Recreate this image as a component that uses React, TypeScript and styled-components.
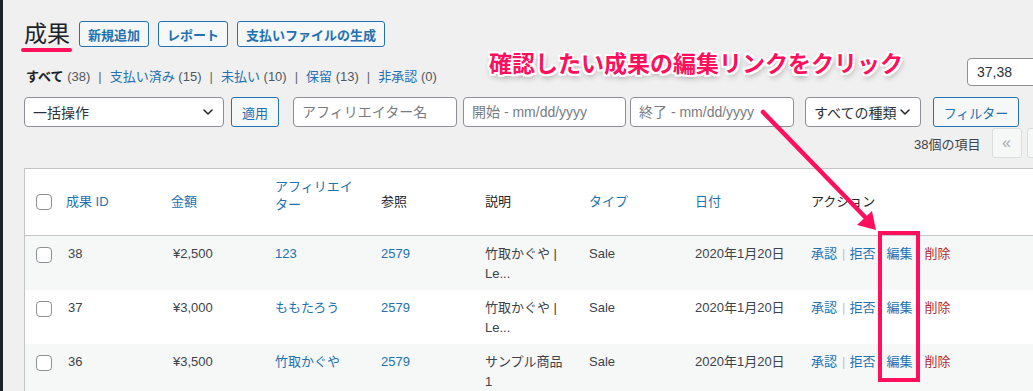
import React from 'react';
import styled, { createGlobalStyle, css } from 'styled-components';

type TAction = { label: string; tone?: 'link' | 'delete'; ml?: number; sep?: boolean };
type TRow = {
  id: string;
  amount: string;
  affiliate: string;
  reference: string;
  description: string;
  type: string;
  date: string;
};

const ROWS: TRow[] = [
  { id: '38', amount: '¥2,500', affiliate: '123', reference: '2579', description: '竹取かぐや | Le...', type: 'Sale', date: '2020年1月20日' },
  { id: '37', amount: '¥3,000', affiliate: 'ももたろう', reference: '2579', description: '竹取かぐや | Le...', type: 'Sale', date: '2020年1月20日' },
  { id: '36', amount: '¥3,500', affiliate: '竹取かぐや', reference: '2579', description: 'サンプル商品 1', type: 'Sale', date: '2020年1月20日' },
];

const ACTIONS: TAction[] = [
  { label: '承認', sep: true },
  { label: '拒否' },
  { label: '編集', ml: 11 },
  { label: '削除', tone: 'delete', ml: 12 },
];

const STATUS = [
  { label: 'すべて', count: 38, current: true },
  { label: '支払い済み', count: 15 },
  { label: '未払い', count: 10 },
  { label: '保留', count: 13 },
  { label: '非承認', count: 0 },
];

// column widths: check, id, amount, affiliate, reference, description, type, date, actions
const COLS = [31, 105, 104, 106, 104, 104, 106, 116, 'auto'] as const;

function Chevron() {
  return (
    <svg width="10" height="6" viewBox="0 0 10 6" fill="none">
      <path d="M1 1l4 4 4-4" stroke="#1d2327" strokeWidth="1.5" strokeLinecap="round" strokeLinejoin="round" />
    </svg>
  );
}

export default function App() {
  return (
    <Page>
      <GlobalStyle />
      <AdminBar />
      <Content>
        <TitleRow>
          <Title>成果</Title>
          <TitleAction>新規追加</TitleAction>
          <TitleAction>レポート</TitleAction>
          <TitleAction>支払いファイルの生成</TitleAction>
        </TitleRow>

        <SubRow>
          <StatusList>
            {STATUS.map((s, i) => (
              <React.Fragment key={s.label}>
                {i > 0 && <StatusSep>|</StatusSep>}
                <StatusLink $current={!!s.current}>{s.label}</StatusLink>
                <Count> ({s.count})</Count>
              </React.Fragment>
            ))}
          </StatusList>
          <SearchInput defaultValue="37,38" />
        </SubRow>

        <FilterRow>
          <Select $w={200}>
            <span>一括操作</span>
            <Chevron />
          </Select>
          <Button $ml={7} $w={48}>適用</Button>
          <TextInput $ml={14} $w={164} placeholder="アフィリエイター名" />
          <TextInput $ml={6} $w={163} placeholder="開始 - mm/dd/yyyy" />
          <TextInput $ml={4} $w={164} placeholder="終了 - mm/dd/yyyy" />
          <Select $ml={11} $w={116}>
            <span>すべての種類</span>
            <Chevron />
          </Select>
          <Button $ml={12} $w={86}>フィルター</Button>
        </FilterRow>

        <PaginationRow>
          <ItemCount>38個の項目</ItemCount>
          <PageButton>«</PageButton>
          <PageButton>‹</PageButton>
          <PageInput defaultValue="1" />
          <PageTotal>/ 2</PageTotal>
          <PageButton $active>›</PageButton>
          <PageButton $active>»</PageButton>
        </PaginationRow>

        <Table>
          <colgroup>
            {COLS.map((w, i) => (
              <col key={i} style={w === 'auto' ? undefined : { width: w }} />
            ))}
          </colgroup>
          <thead>
            <tr>
              <HeadCheck>
                <Checkbox />
              </HeadCheck>
              <Th $sortable>成果 ID</Th>
              <Th $sortable>金額</Th>
              <Th $sortable $lift>アフィリエイター</Th>
              <Th>参照</Th>
              <Th>説明</Th>
              <Th $sortable>タイプ</Th>
              <Th $sortable>日付</Th>
              <Th>アクション</Th>
            </tr>
          </thead>
          <tbody>
            {ROWS.map((r, i) => (
              <Tr key={r.id} $alt={i % 2 === 0}>
                <CheckCell>
                  <Checkbox />
                </CheckCell>
                <Td $nudge={2}>{r.id}</Td>
                <Td $nudge={2}>{r.amount}</Td>
                <Td>
                  <Link>{r.affiliate}</Link>
                </Td>
                <Td>
                  <Link>{r.reference}</Link>
                </Td>
                <Td>{r.description}</Td>
                <Td>{r.type}</Td>
                <Td>{r.date}</Td>
                <Td>
                  <RowActions>
                    {ACTIONS.map(a => (
                      <React.Fragment key={a.label}>
                        <Action $tone={a.tone || 'link'} $ml={a.ml || 0}>
                          {a.label}
                        </Action>
                        {a.sep && <ActionSep>|</ActionSep>}
                      </React.Fragment>
                    ))}
                  </RowActions>
                </Td>
              </Tr>
            ))}
          </tbody>
        </Table>
      </Content>

      {/* annotation overlay */}
      <Callout>確認したい成果の編集リンクをクリック</Callout>
      <ArrowSvg width="140" height="140" viewBox="0 0 140 140">
        <line x1="8" y1="7" x2="110" y2="112" stroke="#ff0f5c" strokeWidth="4.5" strokeLinecap="round" />
        <polygon points="121,125 102,120 117,106" fill="#ff0f5c" />
      </ArrowSvg>
      <Highlight />
    </Page>
  );
}

const PINK = '#ff0f5c';
const BLUE = '#2271b1';

const GlobalStyle = createGlobalStyle`
  html, body {
    margin: 0;
    padding: 0;
    overflow: hidden;
    background: #f0f0f1;
  }
  body {
    font-family: "Liberation Sans", "Noto Sans CJK JP", sans-serif;
    font-size: 13px;
    color: #3c434a;
  }
  * {
    box-sizing: border-box;
  }
`;

const Page = styled.div`
  position: relative;
  display: flex;
  width: 1033px;
  height: 391px;
  overflow: hidden;
  background: #f0f0f1;
`;

const AdminBar = styled.div`
  flex: none;
  width: 3px;
  background: #1d2327;
`;

const Content = styled.div`
  flex: none;
  width: 1196px;
  padding: 21px 0 0 21px;
`;

const TitleRow = styled.div`
  display: flex;
  align-items: center;
  gap: 9px;
  height: 26px;
`;

const Title = styled.h1`
  position: relative;
  margin: 0;
  font-size: 23px;
  font-weight: 400;
  line-height: 26px;
  color: #1d2327;
  &::after {
    content: '';
    position: absolute;
    left: -3px;
    bottom: -5px;
    width: 51px;
    height: 4px;
    border-radius: 2px;
    background: ${PINK};
  }
`;

const TitleAction = styled.a`
  display: inline-flex;
  align-items: center;
  height: 26px;
  padding: 0 8px;
  border: 1px solid ${BLUE};
  border-radius: 3px;
  background: #f6f7f7;
  color: ${BLUE};
  font-size: 13px;
  font-weight: 700;
  white-space: nowrap;
`;

const SubRow = styled.div`
  display: flex;
  align-items: flex-start;
  margin-top: 11px;
`;

const StatusList = styled.div`
  padding: 9px 0 0 2px;
  line-height: 20px;
  font-size: 13px;
  white-space: nowrap;
`;

const StatusLink = styled.a<{ $current: boolean }>`
  color: ${BLUE};
  ${p =>
    p.$current &&
    css`
      color: #1d2327;
      font-weight: 700;
    `}
`;

const Count = styled.span`
  color: #50575e;
`;

const StatusSep = styled.span`
  padding: 0 8px;
  color: #646970;
`;

const SearchInput = styled.input`
  margin-left: auto;
  width: 232px;
  height: 28px;
  padding: 0 9px;
  border: 1px solid #8c8f94;
  border-radius: 4px;
  background: #fff;
  color: #2c3338;
  font-family: inherit;
  font-size: 14px;
  outline: none;
`;

const FilterRow = styled.div`
  display: flex;
  align-items: center;
  margin-top: 10px;
  height: 30px;
`;

const controlBox = css<{ $ml?: number; $w: number }>`
  flex: none;
  width: ${p => p.$w}px;
  height: 30px;
  margin-left: ${p => p.$ml || 0}px;
  border-radius: 4px;
  font-family: inherit;
`;

const Select = styled.div<{ $ml?: number; $w: number }>`
  ${controlBox};
  display: flex;
  align-items: center;
  justify-content: space-between;
  padding: 0 10px 0 8px;
  border: 1px solid #8c8f94;
  background: #fff;
  color: #2c3338;
  font-size: 14px;
  white-space: nowrap;
`;

const TextInput = styled.input<{ $ml?: number; $w: number }>`
  ${controlBox};
  padding: 0 8px;
  border: 1px solid #8c8f94;
  background: #fff;
  font-size: 14px;
  outline: none;
  &::placeholder {
    color: #787c82;
  }
`;

const Button = styled.button<{ $ml?: number; $w: number }>`
  ${controlBox};
  padding: 0;
  border: 1px solid ${BLUE};
  border-radius: 3px;
  background: #f6f7f7;
  color: ${BLUE};
  font-size: 13px;
  white-space: nowrap;
`;

const PaginationRow = styled.div`
  display: flex;
  align-items: center;
  justify-content: flex-end;
  gap: 5px;
  margin-top: 1px;
  padding-right: 10px;
  height: 30px;
`;

const ItemCount = styled.span`
  margin-right: 6px;
  color: #3c434a;
  font-size: 13px;
`;

const PageButton = styled.span<{ $active?: boolean }>`
  display: flex;
  align-items: center;
  justify-content: center;
  width: 30px;
  height: 30px;
  border: 1px solid #dcdcde;
  border-radius: 3px;
  background: #f6f7f7;
  color: #a7aaad;
  font-size: 16px;
  ${p =>
    p.$active &&
    css`
      border-color: ${BLUE};
      color: ${BLUE};
    `}
`;

const PageInput = styled.input`
  width: 34px;
  height: 30px;
  border: 1px solid #8c8f94;
  border-radius: 4px;
  text-align: center;
  font-size: 13px;
`;

const PageTotal = styled.span`
  padding: 0 2px;
  font-size: 13px;
`;

const Table = styled.table`
  width: 100%;
  margin-top: 10px;
  border: 1px solid #c3c4c7;
  border-collapse: separate;
  border-spacing: 0;
  table-layout: fixed;
  background: #fff;
`;

const Th = styled.th<{ $sortable?: boolean; $lift?: boolean }>`
  height: 67px;
  padding: 0 10px;
  border-bottom: 1px solid #c3c4c7;
  text-align: left;
  vertical-align: middle;
  font-size: 13px;
  font-weight: 400;
  line-height: 18px;
  color: ${p => (p.$sortable ? BLUE : '#1d2327')};
  ${p =>
    p.$lift &&
    css`
      padding-bottom: 12px;
    `}
`;

const HeadCheck = styled.td`
  height: 67px;
  padding: 0 0 0 11px;
  border-bottom: 1px solid #c3c4c7;
  vertical-align: middle;
`;

const Tr = styled.tr<{ $alt: boolean }>`
  background: ${p => (p.$alt ? '#f6f7f7' : '#fff')};
`;

const Td = styled.td<{ $nudge?: number }>`
  padding: 8px 10px 6px ${p => 10 + (p.$nudge || 0)}px;
  vertical-align: top;
  font-size: 13px;
  line-height: 20px;
  color: #3c434a;
`;

const CheckCell = styled.td`
  padding: 11px 0 0 11px;
  vertical-align: top;
`;

const Checkbox = styled.span`
  display: block;
  width: 16px;
  height: 16px;
  border: 1px solid #8c8f94;
  border-radius: 4px;
  background: #fff;
`;

const Link = styled.a`
  color: ${BLUE};
`;

const RowActions = styled.div`
  display: flex;
  align-items: center;
  white-space: nowrap;
`;

const Action = styled.a<{ $tone: 'link' | 'delete'; $ml: number }>`
  margin-left: ${p => p.$ml}px;
  color: ${p => (p.$tone === 'delete' ? '#b32d2e' : BLUE)};
`;

const ActionSep = styled.span`
  margin: 0 4px 0 5px;
  color: #c3c4c7;
`;

const Callout = styled.div`
  position: absolute;
  left: 489px;
  top: 48px;
  font-family: "Noto Sans CJK JP", sans-serif;
  font-size: 23px;
  font-weight: 700;
  line-height: 28px;
  color: ${PINK};
  white-space: nowrap;
  text-shadow:
    -2px -2px 0 #fff, 2px -2px 0 #fff, -2px 2px 0 #fff, 2px 2px 0 #fff,
    0 -2px 0 #fff, 0 2px 0 #fff, -2px 0 0 #fff, 2px 0 0 #fff,
    1px 3px 6px rgba(0, 0, 0, 0.45);
`;

const ArrowSvg = styled.svg`
  position: absolute;
  left: 755px;
  top: 105px;
  overflow: visible;
`;

const Highlight = styled.div`
  position: absolute;
  left: 878px;
  top: 231px;
  width: 42px;
  height: 151px;
  border: 4px solid ${PINK};
`;
